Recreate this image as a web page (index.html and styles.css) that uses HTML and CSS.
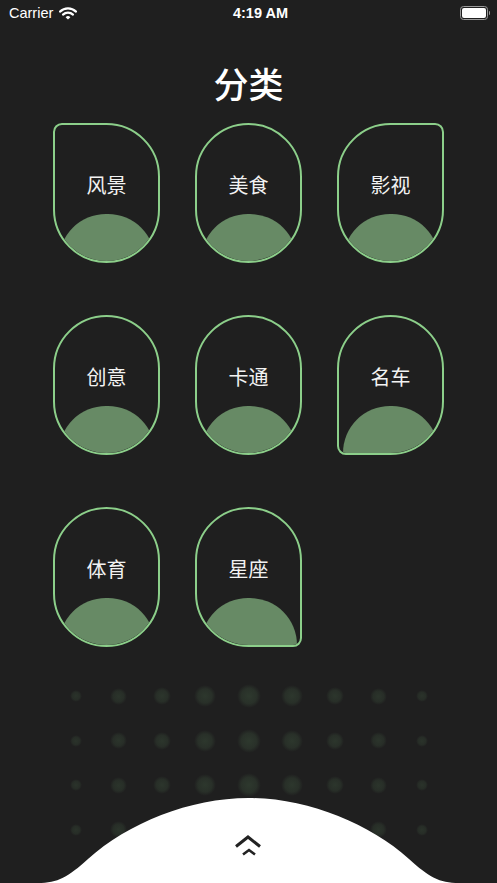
FILE: index.html
```html
<!DOCTYPE html>
<html>
<head>
    <title>分类</title>
    <link rel="stylesheet" href="styles.css">
</head>
<body>

<div class="status-bar">
    <div class="status-left">
        <span class="carrier">Carrier</span>
        <svg class="wifi" width="18" height="13" viewBox="0 0 18 13">
            <path d="M1 4.6 A11.5 11.5 0 0 1 17 4.6" fill="none" stroke="#fff" stroke-width="2.2" stroke-linecap="round"/>
            <path d="M4 7.6 A7.2 7.2 0 0 1 14 7.6" fill="none" stroke="#fff" stroke-width="2.2" stroke-linecap="round"/>
            <path d="M9 12.4 L6.6 10.2 A3.5 3.5 0 0 1 11.4 10.2 Z" fill="#fff"/>
        </svg>
    </div>
    <span class="time">4:19 AM</span>
    <div class="battery">
        <div class="battery-body"><div class="battery-level"></div></div>
        <div class="battery-nub"></div>
    </div>
</div>

<h1 class="title">分类</h1>

<div class="card-grid">
    <div class="card corner-tl"><span class="card-label">风景</span><div class="card-hill"></div></div>
    <div class="card"><span class="card-label">美食</span><div class="card-hill"></div></div>
    <div class="card corner-tr"><span class="card-label">影视</span><div class="card-hill"></div></div>
    <div class="card"><span class="card-label">创意</span><div class="card-hill"></div></div>
    <div class="card"><span class="card-label">卡通</span><div class="card-hill"></div></div>
    <div class="card corner-bl"><span class="card-label">名车</span><div class="card-hill"></div></div>
    <div class="card"><span class="card-label">体育</span><div class="card-hill"></div></div>
    <div class="card corner-br"><span class="card-label">星座</span><div class="card-hill"></div></div>
</div>

<div class="dots">
    <span class="dot d1"></span><span class="dot d2"></span><span class="dot d3"></span><span class="dot d4"></span><span class="dot d5"></span><span class="dot d4"></span><span class="dot d3"></span><span class="dot d2"></span><span class="dot d1"></span>
    <span class="dot d1"></span><span class="dot d2"></span><span class="dot d3"></span><span class="dot d4"></span><span class="dot d5"></span><span class="dot d4"></span><span class="dot d3"></span><span class="dot d2"></span><span class="dot d1"></span>
    <span class="dot d1"></span><span class="dot d2"></span><span class="dot d3"></span><span class="dot d4"></span><span class="dot d5"></span><span class="dot d4"></span><span class="dot d3"></span><span class="dot d2"></span><span class="dot d1"></span>
    <span class="dot d1"></span><span class="dot d2"></span><span class="dot d3"></span><span class="dot d4"></span><span class="dot d5"></span><span class="dot d4"></span><span class="dot d3"></span><span class="dot d2"></span><span class="dot d1"></span>
</div>

<svg class="bottom-sheet" width="497" height="86" viewBox="0 0 497 86">
    <path d="M38 86 C58 86 68 80 88 62 C128 26 190 1 248.5 1 C307 1 369 26 409 62 C429 80 439 86 459 86 Z" fill="#fff"/>
    <polyline points="236,49.5 248,40 260,49.5" fill="none" stroke="#222" stroke-width="3"/>
    <polyline points="243,57.5 249,53 255,57.5" fill="none" stroke="#222" stroke-width="2.6"/>
</svg>

</body>
</html>
```

FILE: styles.css
```css
body {
    margin: 0;
    width: 497px;
    height: 883px;
    overflow: hidden;
    position: relative;
    background-color: #1f1f1f;
    font-family: "Noto Sans CJK SC", "Noto Sans", sans-serif;
    color: #fff;
}

.status-bar {
    height: 26px;
    display: flex;
    align-items: center;
    justify-content: space-between;
    padding: 0 7px 0 9px;
    font-family: "Liberation Sans", Arial, sans-serif;
}

.status-left {
    width: 80px;
    display: flex;
    align-items: center;
    gap: 6px;
}

.carrier {
    font-size: 14.5px;
}

.time {
    font-size: 14.5px;
    font-weight: bold;
    margin-left: 22px;
}

.battery {
    width: 80px;
    display: flex;
    align-items: center;
    justify-content: flex-end;
}

.battery-body {
    width: 24px;
    height: 10px;
    border: 1px solid #9a9a9a;
    border-radius: 3.5px;
    padding: 1px;
}

.battery-level {
    width: 100%;
    height: 100%;
    background-color: #fff;
    border-radius: 2px;
}

.battery-nub {
    width: 1.5px;
    height: 4px;
    background-color: #9a9a9a;
    border-radius: 0 1px 1px 0;
    margin-left: 1px;
}

.title {
    margin: 35px 0 18px;
    font-size: 35px;
    line-height: 44px;
    font-weight: 500;
    text-align: center;
}

.card-grid {
    display: grid;
    grid-template-columns: repeat(3, 107px);
    column-gap: 35px;
    row-gap: 52px;
    justify-content: center;
}

.card {
    height: 140px;
    box-sizing: border-box;
    border: 2px solid #8ccf8a;
    border-radius: 54px;
    overflow: hidden;
    display: flex;
    flex-direction: column;
    align-items: center;
}

.corner-tl { border-top-left-radius: 9px; }
.corner-tr { border-top-right-radius: 9px; }
.corner-bl { border-bottom-left-radius: 9px; }
.corner-br { border-bottom-right-radius: 9px; }

.card-label {
    margin-top: 46px;
    font-size: 20px;
    line-height: 28px;
    color: #f2f2f2;
}

.card-hill {
    margin-top: auto;
    width: 96px;
    height: 47px;
    border-radius: 48px 48px 0 0;
    background-color: #678a65;
}

.dots {
    margin-top: 27px;
    display: grid;
    grid-template-columns: repeat(9, 43.25px);
    grid-auto-rows: 44.5px;
    justify-content: center;
    justify-items: center;
    align-items: center;
}

.dot {
    display: block;
    border-radius: 50%;
    background: radial-gradient(circle, rgba(82, 120, 82, 0.32) 0%, rgba(82, 120, 82, 0.22) 45%, rgba(82, 120, 82, 0) 70%);
}

.d1 { width: 12px; height: 12px; opacity: 0.7; }
.d2 { width: 17px; height: 17px; opacity: 0.75; }
.d3 { width: 18px; height: 18px; opacity: 0.8; }
.d4 { width: 22px; height: 22px; opacity: 0.85; }
.d5 { width: 24px; height: 24px; opacity: 0.9; }

.bottom-sheet {
    position: absolute;
    left: 0;
    bottom: 0;
    display: block;
}
```
